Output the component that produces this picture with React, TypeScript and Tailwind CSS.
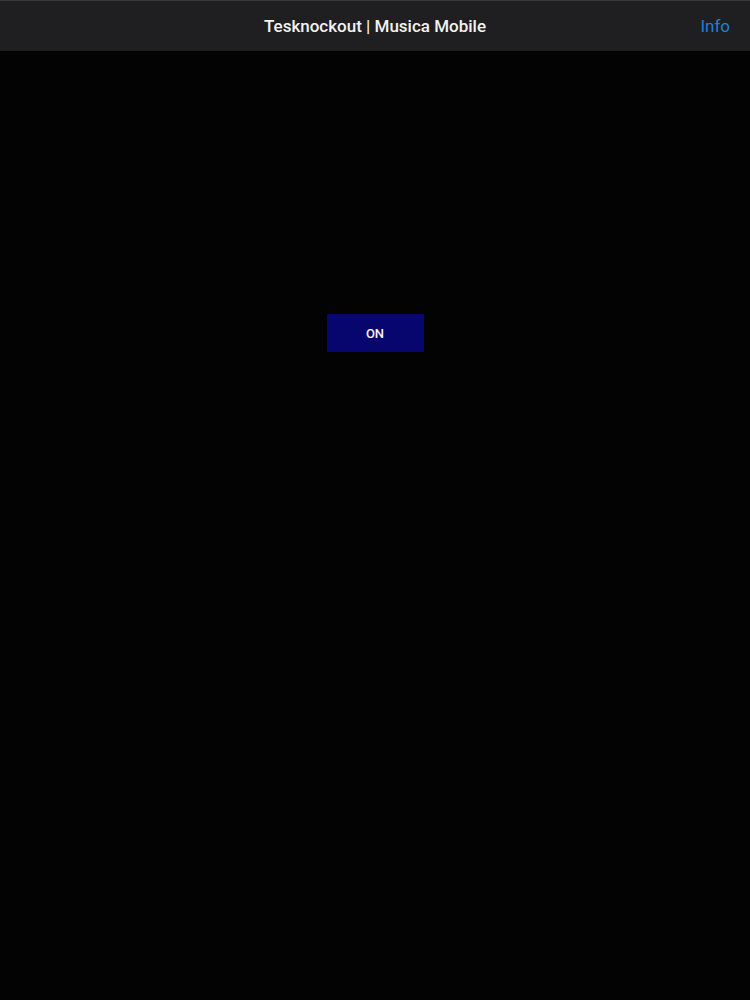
export default function App() {
  return (
    <div className="min-h-[1000px] w-full bg-[#030304] font-['Roboto','Liberation_Sans',sans-serif]">
      {/* Nav bar */}
      <div className="relative flex h-[51px] items-center justify-center border-t border-t-[#3a3a3c] border-b border-b-[#1a1a1a] bg-[#1f1f21] pt-[2px]">
        <span className="text-[17px] font-medium text-[#f2f2f2]">Tesknockout | Musica Mobile</span>
        <button className="absolute right-[20px] top-[13px] text-[17px] text-[#1e7fd8]">Info</button>
      </div>

      <div className="flex justify-center pt-[263px]">
        <button className="h-[38px] w-[97px] bg-[#06066e] pt-[1px] text-[13px] font-medium text-[#f4f4f8]">
          ON
        </button>
      </div>
    </div>
  );
}
